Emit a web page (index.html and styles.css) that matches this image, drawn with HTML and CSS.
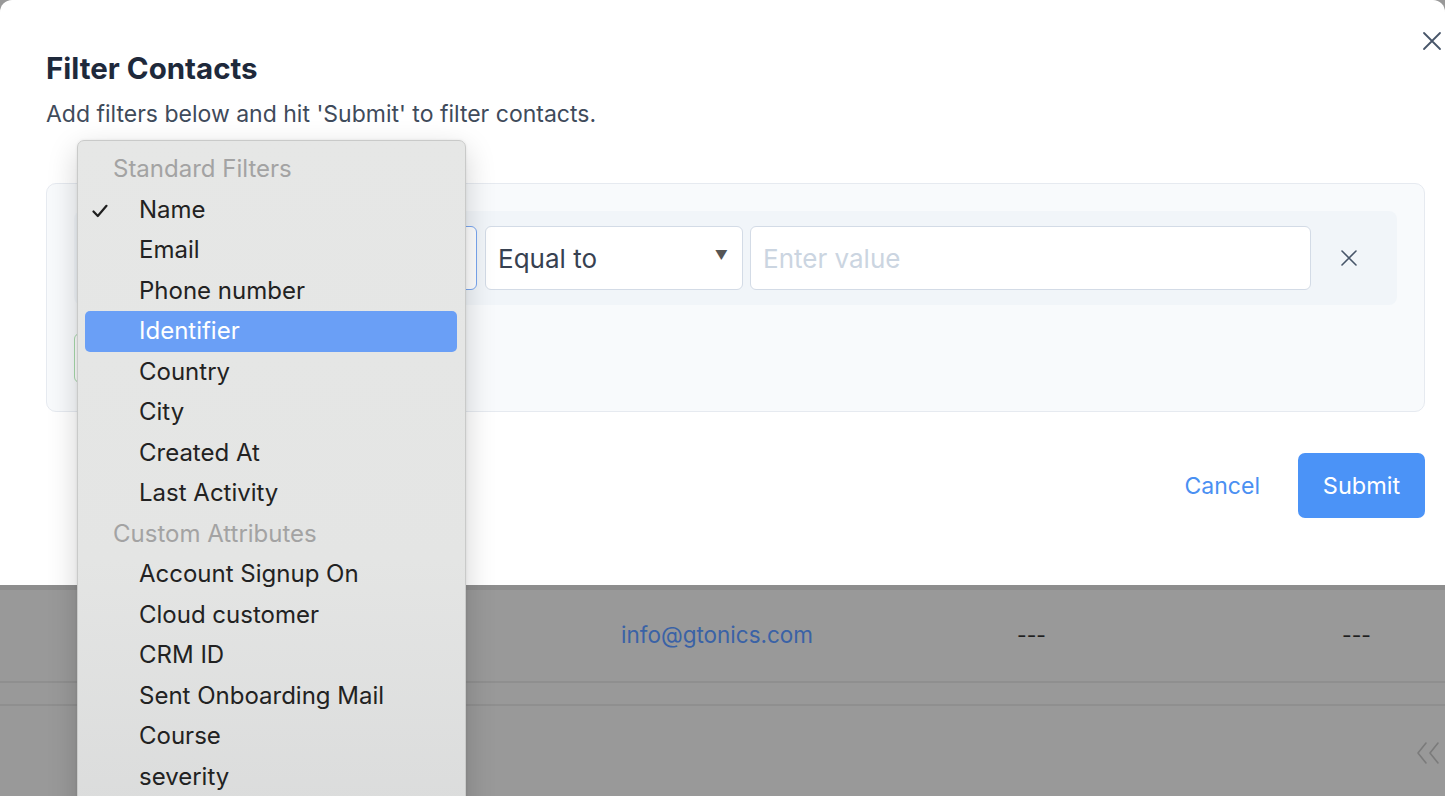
FILE: index.html
```html
<!DOCTYPE html>
<html lang="en">
<head>
<meta charset="utf-8">
<title>Filter Contacts</title>
<link rel="stylesheet" href="styles.css">
</head>
<body>
<div class="screen">
  <section class="modal">
    <button class="close" aria-label="Close">
      <svg width="20" height="20" viewBox="0 0 20 20"><path d="M2 2 L18 18 M18 2 L2 18" stroke="#475569" stroke-width="1.8" fill="none" stroke-linecap="round"/></svg>
    </button>
    <header class="modal-head">
      <h2 class="title">Filter Contacts</h2>
      <p class="subtitle">Add filters below and hit 'Submit' to filter contacts.</p>
    </header>
    <div class="filter-box">
      <div class="filter-row">
        <div class="field attr-select" aria-label="Attribute"></div>
        <div class="field op-select"><span>Equal to</span><span class="caret">&#9660;</span></div>
        <div class="field value-input"><span class="placeholder">Enter value</span></div>
        <button class="remove" aria-label="Remove">
          <svg width="18" height="18" viewBox="0 0 18 18"><path d="M2 2 L16 16 M16 2 L2 16" stroke="#475569" stroke-width="1.6" fill="none" stroke-linecap="round"/></svg>
        </button>
      </div>
      <button class="add-filter" aria-label="Add filter"></button>
    </div>
    <footer class="modal-foot">
      <button class="btn-cancel">Cancel</button>
      <button class="btn-submit">Submit</button>
    </footer>
  </section>
  <section class="backdrop">
    <div class="table-row">
      <span class="cell-email">info@gtonics.com</span>
      <span class="cell-dash one">---</span>
      <span class="cell-dash two">---</span>
    </div>
    <div class="table-gap"></div>
    <div class="pager">
      <svg width="26" height="26" viewBox="0 0 26 26"><path d="M11 3 L3 13 L11 23 M23 3 L15 13 L23 23" stroke="#7b7b7b" stroke-width="1.6" fill="none" stroke-linecap="round" stroke-linejoin="round"/></svg>
    </div>
  </section>

  <div class="menu">
    <div class="menu-group">Standard Filters</div>
    <div class="menu-item checked"><svg class="check" width="16" height="14" viewBox="0 0 16 14"><path d="M1.5 7.5 L5.8 12 L14.5 1.8" stroke="#1f1f1f" stroke-width="2.2" fill="none" stroke-linecap="round" stroke-linejoin="round"/></svg>Name</div>
    <div class="menu-item">Email</div>
    <div class="menu-item">Phone number</div>
    <div class="menu-item active">Identifier</div>
    <div class="menu-item">Country</div>
    <div class="menu-item">City</div>
    <div class="menu-item">Created At</div>
    <div class="menu-item">Last Activity</div>
    <div class="menu-group">Custom Attributes</div>
    <div class="menu-item">Account Signup On</div>
    <div class="menu-item">Cloud customer</div>
    <div class="menu-item">CRM ID</div>
    <div class="menu-item">Sent Onboarding Mail</div>
    <div class="menu-item">Course</div>
    <div class="menu-item">severity</div>
  </div>
</div>
</body>
</html>
```

FILE: styles.css
```css
* { box-sizing: border-box; }
html, body { margin: 0; padding: 0; }
body {
  width: 1445px;
  height: 796px;
  overflow: hidden;
  background: #999999;
  font-family: Inter, "Liberation Sans", sans-serif;
}
.screen {
  position: relative;
  width: 1445px;
  height: 796px;
  overflow: hidden;
  display: flex;
  flex-direction: column;
}
.modal {
  position: relative;
  height: 585px;
  flex: none;
  background: #ffffff;
  border-radius: 12px 12px 0 0;
  padding: 0 20px 0 46px;
  display: flex;
  flex-direction: column;
}
.close {
  position: absolute;
  top: 31px;
  right: 3px;
  border: 0;
  background: none;
  padding: 0;
  width: 20px;
  height: 20px;
}
.modal-head { padding-top: 48px; }
.title {
  margin: 0;
  font-size: 29.5px;
  font-weight: 700;
  color: #1e293b;
  line-height: 40px;
}
.subtitle {
  margin: 10px 0 0;
  font-size: 23px;
  color: #3f4b5b;
  line-height: 32px;
}
.filter-box {
  margin-top: 53px;
  width: 1379px;
  height: 229px;
  flex: none;
  background: #f8fafc;
  border: 1px solid #e6eaf0;
  border-radius: 10px;
  padding: 27px 27px 0 27px;
}
.filter-row {
  height: 94px;
  background: #f1f5f9;
  border-radius: 8px;
  display: flex;
  align-items: center;
  padding: 0 15px;
  gap: 8px;
}
.field {
  height: 64px;
  background: #ffffff;
  border: 1.5px solid #d3dbe6;
  border-radius: 6px;
  display: flex;
  align-items: center;
  padding: 0 12px;
  font-size: 26px;
  color: #374151;
}
.attr-select { width: 388px; border-color: #7aa7f0; }
.op-select { width: 258px; justify-content: space-between; padding-right: 14px; }
.caret { font-size: 13px; color: #555; margin-top: -6px; }
.value-input { width: 561px; margin-left: -1px; }
.placeholder { color: #cbd5e1; }
.remove {
  border: 0;
  background: none;
  padding: 0;
  margin-left: 21px;
  width: 18px;
  height: 18px;
}
.add-filter {
  display: block;
  margin-top: 28px;
  width: 170px;
  height: 50px;
  padding: 0;
  border: 1.5px solid #a7d8aa;
  border-radius: 6px;
  background: #fff;
}
.modal-foot {
  margin-top: 41px;
  display: flex;
  justify-content: flex-end;
  align-items: center;
  gap: 38px;
}
.btn-cancel {
  border: 0;
  background: none;
  font-family: inherit;
  font-size: 23px;
  color: #4a90f2;
  padding: 0;
}
.btn-submit {
  width: 127px;
  height: 65px;
  border: 0;
  border-radius: 7px;
  background: #4b93f7;
  color: #ffffff;
  font-family: inherit;
  font-size: 23.5px;
}
.backdrop {
  flex: 1;
  background: #999999;
  border-top: 5px solid #8e8e8e;
  position: relative;
}
.table-row {
  height: 93px;
  border-bottom: 2px solid #8f8f8f;
  display: flex;
  align-items: center;
  position: relative;
  font-size: 22.5px;
}
.cell-email { margin-left: 621px; color: #3a62a6; margin-top: -2px; }
.cell-dash { color: #1f1f1f; position: absolute; font-size: 21px; }
.cell-dash.one { left: 1017px; }
.cell-dash.two { left: 1342px; }
.table-gap {
  height: 23px;
  border-bottom: 2px solid #8f8f8f;
}
.pager {
  display: flex;
  justify-content: flex-end;
  padding: 34px 4px 0 0;
}

.menu {
  position: absolute;
  left: 77px;
  top: 140px;
  width: 389px;
  height: 700px;
  background: linear-gradient(#e6e7e6, #e4e5e4 60%, #dadbdb);
  border: 1px solid #c9cac9;
  border-radius: 7px;
  box-shadow: 0 10px 30px rgba(0,0,0,0.18), 0 0 3px rgba(0,0,0,0.08);
  padding: 8px 8px 0 7px;
  font-family: Inter, "Liberation Sans", sans-serif;
}
.menu-group {
  height: 40.5px;
  line-height: 40.5px;
  padding-left: 28px;
  font-size: 24px;
  color: #a3a3a3;
}
.menu-item {
  position: relative;
  height: 40.5px;
  line-height: 40.5px;
  padding-left: 54px;
  font-size: 24px;
  color: #222222;
  border-radius: 5px;
}
.menu-item.active { background: #6a9ff6; color: #ffffff; }
.check {
  position: absolute;
  left: 7px;
  top: 14px;
}
```
